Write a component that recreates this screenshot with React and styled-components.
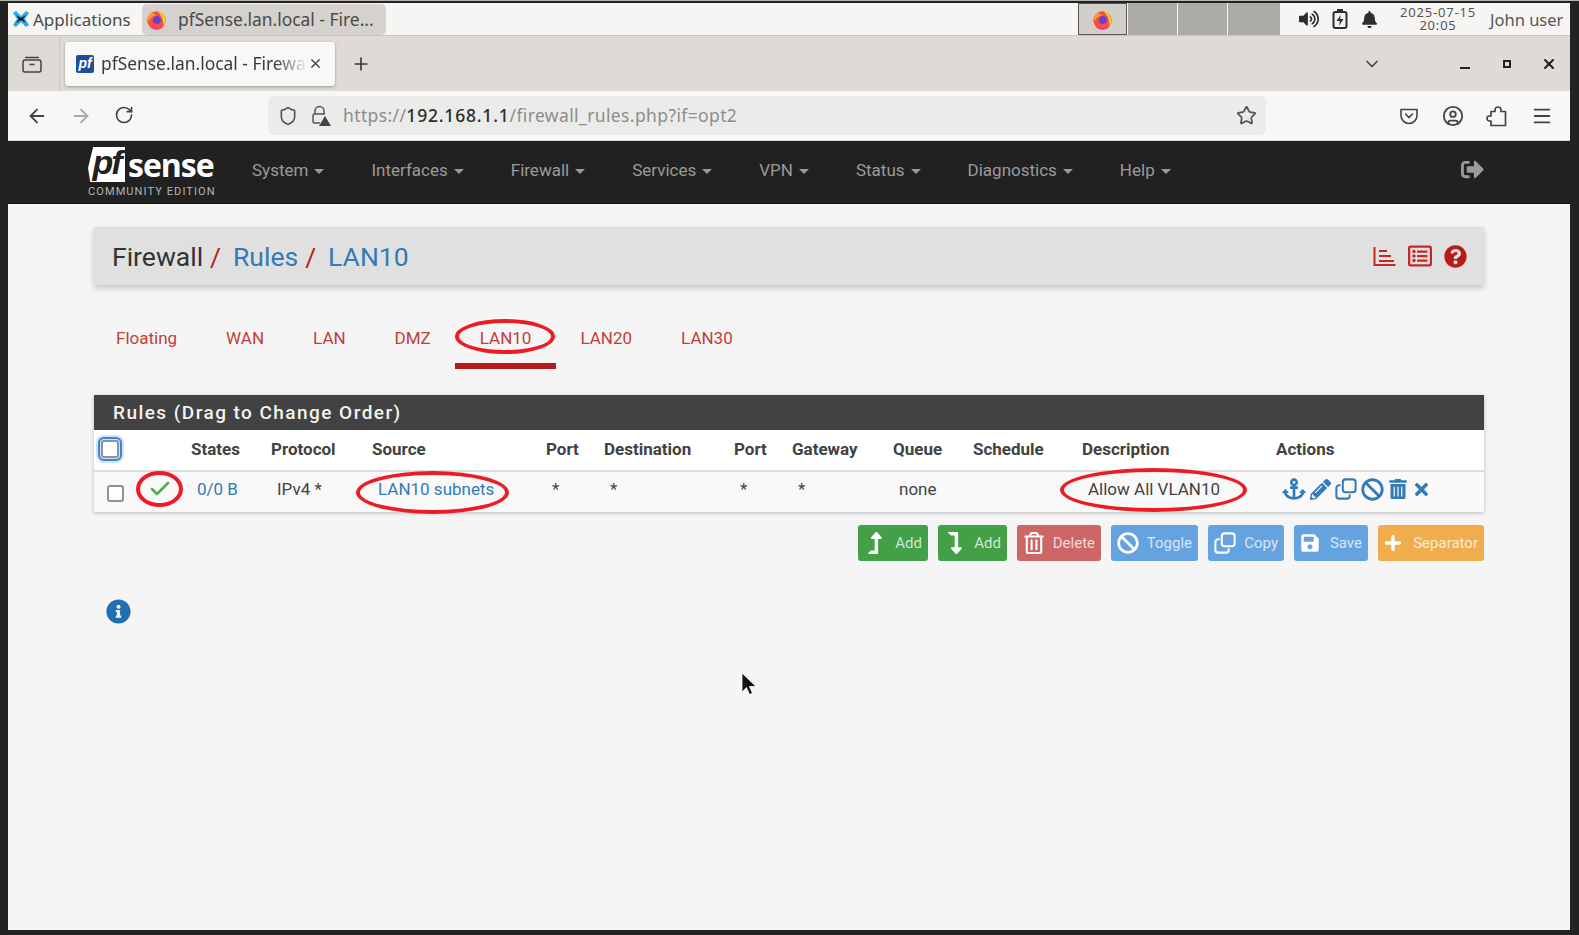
import styled, { createGlobalStyle } from "styled-components";
import {
  ArrowLeft,
  ArrowRight,
  Check,
  RotateCw,
  Shield,
  Star,
  Plus,
  X,
  ChevronDown,
  Menu,
  CircleUser,
} from "lucide-react";
import {
  FaAnchor,
  FaBan,
  FaBell,
  FaInfoCircle,
  FaLevelDownAlt,
  FaLevelUpAlt,
  FaPencilAlt,
  FaPlus,
  FaQuestionCircle,
  FaRegListAlt,
  FaRegTrashAlt,
  FaSave,
  FaSignOutAlt,
  FaTimes,
  FaTrashAlt,
  FaVolumeUp,
} from "react-icons/fa";

const GlobalStyle = createGlobalStyle`
  html, body {
    margin: 0;
    height: 100%;
    background: #222222;
    overflow: hidden;
  }
  * { box-sizing: border-box; }
`;

const Screen = styled.div`
  width: 1579px;
  height: 935px;
  padding: 2px 9px 5px 8px;
  background: #222222;
  border-top: 1px solid #b5b5b5;
  position: relative;
`;

const Desktop = styled.div`
  height: 100%;
  display: flex;
  flex-direction: column;
  background: #f5f5f5;
`;

/* xfce panel */
const Panel = styled.div`
  height: 33px;
  flex: none;
  display: flex;
  align-items: center;
  background: #f6f5f4;
  border-bottom: 1px solid #c9c6c1;
  font-family: "Noto Sans", sans-serif;
  color: #4a4a48;
  font-size: 17px;
`;

const AppMenu = styled.div`
  display: flex;
  align-items: center;
  gap: 3px;
  padding-left: 4px;
  width: 134px;
  flex: none;
`;

const WindowButton = styled.div`
  width: 244px;
  height: 31px;
  flex: none;
  display: flex;
  align-items: center;
  gap: 11px;
  padding-left: 4px;
  border-radius: 5px;
  background: #d5d1cc;
  font-size: 17.4px;
  white-space: nowrap;
`;

const Spacer = styled.div`
  flex: 1;
`;

const Workspaces = styled.div`
  display: flex;
  gap: 1px;
  height: 32px;
  margin-right: 19px;
`;

const Workspace = styled.div`
  width: ${({ $w }) => $w}px;
  display: flex;
  align-items: center;
  justify-content: center;
  background: ${({ $active }) => ($active ? "#d2cfca" : "#adaba7")};
  border: ${({ $active }) => ($active ? "1px solid #555" : "none")};
`;

const Tray = styled.div`
  display: flex;
  align-items: center;
  gap: 13px;
  color: #2e2e2e;
`;

const Clock = styled.div`
  margin-left: 19px;
  padding-bottom: 1px;
  text-align: center;
  font-size: 13px;
  line-height: 13px;
  letter-spacing: 0.8px;
  width: 82px;
  color: #555;
`;

const UserName = styled.div`
  margin-left: 11px;
  width: 80px;
  font-size: 16.5px;
  color: #555;
`;

/* firefox chrome */
const TabStrip = styled.div`
  height: 55px;
  flex: none;
  display: flex;
  align-items: center;
  background: #dedbd6;
  font-family: "Noto Sans", sans-serif;
  color: #3a3a3a;
`;

const StripIcon = styled.div`
  width: 52px;
  height: 100%;
  flex: none;
  display: flex;
  align-items: center;
  justify-content: center;
  padding-right: 3px;
  border-right: 1px solid #c8c5c0;
`;

const BrowserTab = styled.div`
  width: 270px;
  height: 44px;
  margin-left: 5px;
  display: flex;
  align-items: center;
  padding-left: 11px;
  background: #f8f8f7;
  border-radius: 4px;
  box-shadow: 0 1px 3px rgba(0, 0, 0, 0.3);
  font-size: 17.4px;
  position: relative;
`;

const TabTitle = styled.div`
  margin: -2px 0 0 7px;
  width: 207px;
  white-space: nowrap;
  -webkit-mask-image: linear-gradient(to right, #000 84%, transparent 100%);
  mask-image: linear-gradient(to right, #000 84%, transparent 100%);
`;

const Favicon = styled.div`
  width: 18px;
  height: 18px;
  flex: none;
  background: #1b4f9c;
  border-radius: 2px;
  color: #fff;
  font: italic 700 14px/17px "Liberation Sans", sans-serif;
  text-align: center;
`;

const NewTab = styled.div`
  margin-left: 16px;
  display: flex;
`;

const WindowControls = styled.div`
  display: flex;
  align-items: center;
  color: #1f1f1f;
`;

const ListTabs = styled.div`
  display: flex;
  margin-right: 62px;
  color: #444;
`;

const WinBtn = styled.div`
  width: 42px;
  display: flex;
  justify-content: center;
  align-items: center;
`;

const MinimizeBar = styled.div`
  width: 10px;
  height: 2px;
  margin-top: 8px;
  background: #222;
`;

const MaximizeBox = styled.div`
  width: 8px;
  height: 8px;
  border: 2px solid #222;
`;

const Toolbar = styled.div`
  height: 50px;
  flex: none;
  display: flex;
  align-items: center;
  background: #f7f7f6;
  border-bottom: 1px solid #d6d4d0;
  font-family: "Noto Sans", sans-serif;
`;

const NavButtons = styled.div`
  width: 260px;
  flex: none;
  padding-left: 18px;
  display: flex;
  gap: 22px;
  color: #444;
`;

const UrlBar = styled.div`
  width: 998px;
  height: 39px;
  display: flex;
  align-items: center;
  padding: 0 9px 0 10px;
  background: #ebebea;
  border-radius: 6px;
  color: #555;
`;

const UrlText = styled.div`
  margin: -2px 0 0 12px;
  flex: 1;
  font-size: 17.5px;
  letter-spacing: 0.38px;
  color: #8d8d8d;
  white-space: nowrap;
`;

const UrlHost = styled.span`
  color: #2c2c2c;
  font-weight: 500;
  letter-spacing: 0.8px;
`;

const LockWrap = styled.div`
  margin-left: 13px;
  display: flex;
`;

const ToolIcons = styled.div`
  display: flex;
  align-items: center;
  gap: 22.5px;
  padding-left: 133px;
  color: #444;
`;

/* pfSense */
const TopNav = styled.nav`
  height: 63px;
  flex: none;
  display: flex;
  align-items: center;
  padding: 0 86px 0 80px;
  background: #212121;
  border-bottom: 1px solid #111;
  font-family: "Roboto", sans-serif;
`;

const Logo = styled.div`
  width: 128px;
  flex: none;
  margin-right: 36px;
  display: flex;
  flex-direction: column;
  color: #fff;
`;

const LogoTop = styled.div`
  display: flex;
  align-items: center;
  height: 37px;
`;

const LogoMark = styled.div`
  width: 37px;
  height: 35px;
  background: #fff;
  color: #212121;
  border-radius: 3px 0 0 0;
  clip-path: polygon(14% 0, 100% 0, 100% 100%, 6% 100%, 0 60%);
  font: italic 700 34px/31px "Liberation Sans", sans-serif;
  letter-spacing: -2px;
  text-align: center;
`;

const LogoWord = styled.div`
  margin-left: 3px;
  font: 700 32px/37px "Open Sans", sans-serif;
  letter-spacing: -1px;
`;

const LogoSub = styled.div`
  margin-top: 2px;
  font-size: 11px;
  line-height: 13px;
  letter-spacing: 1.1px;
  color: #b5b5b5;
  white-space: nowrap;
`;

const NavItems = styled.div`
  display: flex;
  gap: 47px;
  flex: 1;
  padding-bottom: 4px;
`;

const NavItem = styled.div`
  display: flex;
  align-items: center;
  gap: 6px;
  font-size: 17px;
  color: #9a9a9a;
`;

const Caret = styled.span`
  width: 0;
  height: 0;
  margin-top: 2px;
  border-left: 5px solid transparent;
  border-right: 5px solid transparent;
  border-top: 5px solid #9a9a9a;
`;

const LogoutIcon = styled.div`
  display: flex;
  padding-bottom: 5px;
  color: #9a9a9a;
`;

const Main = styled.main`
  flex: 1;
  padding: 23px 86px 0;
  font-family: "Roboto", sans-serif;
  color: #424242;
  position: relative;
`;

const Crumbs = styled.div`
  height: 58px;
  display: flex;
  align-items: center;
  padding: 0 17px 0 18px;
  background: #e0e0e0;
  box-shadow: 0 3px 6px rgba(0, 0, 0, 0.2);
  font-size: 26.5px;
  white-space: pre;
`;

const CrumbText = styled.span`
  color: ${({ $link }) => ($link ? "#337ab7" : "#333")};
`;

const CrumbSlash = styled.span`
  color: #b71c1c;
  margin: 0 12px 0 7px;
`;

const CrumbIcons = styled.div`
  margin-left: auto;
  display: flex;
  align-items: center;
  gap: 12px;
  color: #c62828;
`;

const QuestionIcon = styled.span`
  display: flex;
  color: #b71c1c;
`;

const Tabs = styled.div`
  margin: 30px 0 0 -2.5px;
  display: flex;
`;

const TabLink = styled.div`
  height: 54px;
  padding: 12px 24.5px 0;
  position: relative;
  font-size: 17px;
  line-height: 22px;
  color: #c43c3c;
  border-bottom: 6px solid ${({ $active }) => ($active ? "#b71c1c" : "transparent")};
`;

const Ring = styled.span`
  position: absolute;
  border: 4px solid #ed1c24;
  border-radius: 50%;
  pointer-events: none;
`;

const TabRing = styled(Ring)`
  left: 0;
  top: 4px;
  width: 100px;
  height: 35px;
`;

const StatusRing = styled(Ring)`
  left: 2px;
  top: -1px;
  width: 47px;
  height: 36px;
`;

const SourceRing = styled(Ring)`
  left: -9px;
  top: -1px;
  width: 153px;
  height: 43px;
`;

const DescriptionRing = styled(Ring)`
  left: -15px;
  top: -4px;
  width: 187px;
  height: 44px;
`;

const RulesPanel = styled.section`
  margin-top: 26px;
  box-shadow: 0 1px 4px rgba(0, 0, 0, 0.25);
`;

const PanelTitle = styled.h2`
  margin: 0;
  height: 35px;
  padding-left: 19px;
  background: #424242;
  color: #f2f2f2;
  font-size: 19px;
  font-weight: 500;
  line-height: 35px;
  letter-spacing: 1.45px;
`;

const columns = "40px 50px 80px 101px 174px 58px 130px 58px 101px 80px 109px 194px 1fr";

const HeadRow = styled.div`
  display: grid;
  grid-template-columns: ${columns};
  height: 42px;
  padding-bottom: 2px;
  align-items: center;
  background: #fff;
  border-bottom: 2px solid #ddd;
`;

const HeadCell = styled.div`
  padding-left: 7px;
  font-size: 17px;
  font-weight: 700;
  color: #424242;
  white-space: nowrap;
`;

const DataRow = styled.div`
  display: grid;
  grid-template-columns: ${columns};
  height: 40px;
  align-items: center;
  background: #f9f9f9;
`;

const DataCell = styled.div`
  position: relative;
  height: 100%;
  display: flex;
  align-items: center;
  padding: 0 0 6px 13px;
  font-size: 17px;
  white-space: nowrap;
  color: ${({ $link }) => ($link ? "#337ab7" : "#424242")};
`;

const HeadCheck = styled.input`
  appearance: none;
  margin: 0 0 0 7px;
  width: 18px;
  height: 18px;
  background: #fff;
  border: 2px solid #8f8f9d;
  border-radius: 3px;
  outline: 2px solid #3b82e0;
  outline-offset: 1px;
  box-shadow: 0 0 0 5px rgba(59, 130, 224, 0.22);
`;

const RowCheck = styled.input`
  appearance: none;
  margin: 8px 0 0;
  width: 17px;
  height: 17px;
  background: #fff;
  border: 2px solid #8f8f9d;
  border-radius: 3px;
`;

const StatusIcon = styled.div`
  display: flex;
  margin-left: 1px;
  color: #4caf50;
`;

const ActionIcons = styled.div`
  display: flex;
  align-items: center;
  gap: 4px;
  color: #337ab7;
`;

const ButtonRow = styled.div`
  margin-top: 13px;
  display: flex;
  justify-content: flex-end;
  gap: 10px;
`;

const ActionButton = styled.div`
  width: ${({ $w }) => $w}px;
  height: 36px;
  display: flex;
  align-items: center;
  justify-content: space-between;
  padding: 0 6px;
  background: ${({ $bg }) => $bg};
  border-radius: 3px;
  color: rgba(255, 255, 255, 0.75);
  font-size: 15px;
`;

const ButtonIcon = styled.span`
  display: flex;
  color: #fff;
`;

const InfoIcon = styled.div`
  margin: 38px 0 0 12px;
  display: flex;
  color: #1f6fb2;
`;

const Pointer = styled.svg`
  position: absolute;
  left: 741px;
  top: 671px;
`;

function FirefoxIcon({ size = 22 }) {
  return (
    <svg width={size} height={size} viewBox="0 0 24 24">
      <circle cx="12" cy="13" r="10.5" fill="#f5503f" />
      <path d="M4 20a10.5 10.5 0 0 0 16 0c-5 2-11 2-16 0z" fill="#f0388f" />
      <path d="M13 2c5 2 9 6 9 11 0 3-1 5-2 6 0-8-3-12-7-17z" fill="#ffcb2f" />
      <path d="M6 4c-3 3-4 6-3 10 3-5 6-7 9-7-2-1-4-2-6-3z" fill="#ff9a2b" />
      <circle cx="12.5" cy="12.5" r="4.6" fill="#6b3fd4" />
    </svg>
  );
}

function XfceIcon() {
  return (
    <svg width="18" height="18" viewBox="0 0 18 18">
      <path d="M1 3l3-2 5 5 5-5 3 2-4 6 4 6-3 2-5-5-5 5-3-2 4-6z" fill="#29a9e8" />
      <path d="M4 5l5 3 5-3-3 4 3 4-5-3-5 3 3-4z" fill="#111" />
    </svg>
  );
}

function TabGroupIcon() {
  return (
    <svg width="20" height="20" viewBox="0 0 20 20" fill="none" stroke="#444" strokeWidth="1.5">
      <rect x="1" y="6" width="18" height="12" rx="2" />
      <path d="M3 3.500h14M7.500 10.500h5" />
    </svg>
  );
}

function SiteLockIcon() {
  return (
    <svg width="20" height="22" viewBox="0 0 20 22" fill="none">
      <path d="M4 9V6a4.500 4.500 0 0 1 9 0v3" stroke="#555" strokeWidth="1.5" />
      <path d="M9 18H3.500A1.500 1.500 0 0 1 2 16.500V10.500A1.500 1.500 0 0 1 3.500 9H14" stroke="#555" strokeWidth="1.5" />
      <path d="M14 11l6 10H8z" fill="#444" />
    </svg>
  );
}

function PocketIcon() {
  return (
    <svg width="20" height="20" viewBox="0 0 20 20" fill="none" stroke="#444" strokeWidth="1.6">
      <path d="M2 3.500h16v6a8 8 0 0 1-16 0z" strokeLinejoin="round" />
      <path d="M6.500 8l3.500 3.500L13.500 8" strokeLinecap="round" />
    </svg>
  );
}

function ExtensionIcon() {
  return (
    <svg width="22" height="22" viewBox="0 0 22 22" fill="none" stroke="#444" strokeWidth="1.7" strokeLinejoin="round">
      <path d="M9 6.500V5a3 3 0 0 1 6 0v1.500h4.500v14H5V16H3.500a2.500 2.500 0 0 1 0-5H5V6.500z" />
    </svg>
  );
}

function BatteryIcon() {
  return (
    <svg width="16" height="20" viewBox="0 0 16 20" fill="none">
      <rect x="1.500" y="3" width="13" height="16" rx="2" stroke="#2e2e2e" strokeWidth="2" />
      <rect x="5" y="0" width="6" height="3" fill="#2e2e2e" />
      <path d="M9 5.500L4.500 12H8l-1 5 4.500-7H8z" fill="#2e2e2e" />
    </svg>
  );
}

function ChartIcon() {
  return (
    <svg width="23" height="21" viewBox="0 0 23 21" fill="none" stroke="currentColor" strokeWidth="2">
      <path d="M1.500 1v18h21" />
      <path d="M6 5h8M6 10h12M6 15h15" />
    </svg>
  );
}

function CloneIcon({ size }) {
  return (
    <svg width={size} height={size} viewBox="0 0 24 24" fill="none" stroke="currentColor" strokeWidth="2.2">
      <rect x="8.500" y="1.500" width="14" height="14" rx="3" />
      <path d="M6 8H4.500a3 3 0 0 0-3 3v8.500a3 3 0 0 0 3 3H13a3 3 0 0 0 3-3V18" />
    </svg>
  );
}

const navItems = ["System", "Interfaces", "Firewall", "Services", "VPN", "Status", "Diagnostics", "Help"];

function Columns() {
  const titles = ["States", "Protocol", "Source", "Port", "Destination", "Port", "Gateway", "Queue", "Schedule", "Description", "Actions"];
  return titles.map((title, i) => <HeadCell key={i}>{title}</HeadCell>);
}

export default function App() {
  return (
    <>
      <GlobalStyle />
      <Screen>
        <Desktop>
          <Panel>
            <AppMenu>
              <XfceIcon />
              Applications
            </AppMenu>
            <WindowButton>
              <FirefoxIcon size={21} />
              pfSense.lan.local - Fire...
            </WindowButton>
            <Spacer />
            <Workspaces>
              <Workspace $w={49} $active>
                <FirefoxIcon size={21} />
              </Workspace>
              <Workspace $w={49} />
              <Workspace $w={49} />
              <Workspace $w={52} />
            </Workspaces>
            <Tray>
              <FaVolumeUp size={20} />
              <BatteryIcon />
              <FaBell size={17} />
            </Tray>
            <Clock>
              2025-07-15
              <br />
              20:05
            </Clock>
            <UserName>John user</UserName>
          </Panel>

          <TabStrip>
            <StripIcon>
              <TabGroupIcon />
            </StripIcon>
            <BrowserTab>
              <Favicon>pf</Favicon>
              <TabTitle>pfSense.lan.local - Firewa</TabTitle>
              <X size={15} />
            </BrowserTab>
            <NewTab>
              <Plus size={20} />
            </NewTab>
            <Spacer />
            <ListTabs>
              <ChevronDown size={20} />
            </ListTabs>
            <WindowControls>
              <WinBtn>
                <MinimizeBar />
              </WinBtn>
              <WinBtn>
                <MaximizeBox />
              </WinBtn>
              <WinBtn>
                <X size={16} strokeWidth={3} />
              </WinBtn>
            </WindowControls>
          </TabStrip>

          <Toolbar>
            <NavButtons>
              <ArrowLeft size={22} />
              <ArrowRight size={22} color="#aaa" />
              <RotateCw size={20} />
            </NavButtons>
            <UrlBar>
              <Shield size={20} />
              <LockWrap>
                <SiteLockIcon />
              </LockWrap>
              <UrlText>
                https://<UrlHost>192.168.1.1</UrlHost>/firewall_rules.php?if=opt2
              </UrlText>
              <Star size={21} />
            </UrlBar>
            <ToolIcons>
              <PocketIcon />
              <CircleUser size={22} />
              <ExtensionIcon />
              <Menu size={22} />
            </ToolIcons>
          </Toolbar>

          <TopNav>
            <Logo>
              <LogoTop>
                <LogoMark>pf</LogoMark>
                <LogoWord>sense</LogoWord>
              </LogoTop>
              <LogoSub>COMMUNITY EDITION</LogoSub>
            </Logo>
            <NavItems>
              {navItems.map((item) => (
                <NavItem key={item}>
                  {item}
                  <Caret />
                </NavItem>
              ))}
            </NavItems>
            <LogoutIcon>
              <FaSignOutAlt size={23} />
            </LogoutIcon>
          </TopNav>

          <Main>
            <Crumbs>
              <CrumbText>Firewall</CrumbText>
              <CrumbSlash>/</CrumbSlash>
              <CrumbText $link>Rules</CrumbText>
              <CrumbSlash>/</CrumbSlash>
              <CrumbText $link>LAN10</CrumbText>
              <CrumbIcons>
                <ChartIcon />
                <FaRegListAlt size={24} />
                <QuestionIcon>
                  <FaQuestionCircle size={23} />
                </QuestionIcon>
              </CrumbIcons>
            </Crumbs>

            <Tabs>
              <TabLink>Floating</TabLink>
              <TabLink>WAN</TabLink>
              <TabLink>LAN</TabLink>
              <TabLink>DMZ</TabLink>
              <TabLink $active>
                LAN10
                <TabRing />
              </TabLink>
              <TabLink>LAN20</TabLink>
              <TabLink>LAN30</TabLink>
            </Tabs>

            <RulesPanel>
              <PanelTitle>Rules (Drag to Change Order)</PanelTitle>
              <HeadRow>
                <HeadCheck type="checkbox" readOnly />
                <div />
                <Columns />
              </HeadRow>
              <DataRow>
                <DataCell>
                  <RowCheck type="checkbox" readOnly />
                </DataCell>
                <DataCell>
                  <StatusIcon>
                    <Check size={24} strokeWidth={2.6} />
                  </StatusIcon>
                  <StatusRing />
                </DataCell>
                <DataCell $link>0/0 B</DataCell>
                <DataCell>IPv4 *</DataCell>
                <DataCell $link>
                  LAN10 subnets
                  <SourceRing />
                </DataCell>
                <DataCell>*</DataCell>
                <DataCell>*</DataCell>
                <DataCell>*</DataCell>
                <DataCell>*</DataCell>
                <DataCell>none</DataCell>
                <DataCell />
                <DataCell>
                  Allow All VLAN10
                  <DescriptionRing />
                </DataCell>
                <DataCell>
                  <ActionIcons>
                    <FaAnchor size={24} />
                    <FaPencilAlt size={21} />
                    <CloneIcon size={22} />
                    <FaBan size={23} />
                    <FaTrashAlt size={20} />
                    <FaTimes size={19} />
                  </ActionIcons>
                </DataCell>
              </DataRow>
            </RulesPanel>

            <ButtonRow>
              <ActionButton $w={70} $bg="#43a047">
                <ButtonIcon>
                  <FaLevelUpAlt size={22} />
                </ButtonIcon>
                Add
              </ActionButton>
              <ActionButton $w={69} $bg="#43a047">
                <ButtonIcon>
                  <FaLevelDownAlt size={22} />
                </ButtonIcon>
                Add
              </ActionButton>
              <ActionButton $w={84} $bg="#cd6666">
                <ButtonIcon>
                  <FaRegTrashAlt size={22} />
                </ButtonIcon>
                Delete
              </ActionButton>
              <ActionButton $w={87} $bg="#64a3df">
                <ButtonIcon>
                  <FaBan size={22} />
                </ButtonIcon>
                Toggle
              </ActionButton>
              <ActionButton $w={76} $bg="#64a3df">
                <ButtonIcon>
                  <CloneIcon size={22} />
                </ButtonIcon>
                Copy
              </ActionButton>
              <ActionButton $w={74} $bg="#64a3df">
                <ButtonIcon>
                  <FaSave size={20} />
                </ButtonIcon>
                Save
              </ActionButton>
              <ActionButton $w={106} $bg="#f0ad4e">
                <ButtonIcon>
                  <FaPlus size={18} />
                </ButtonIcon>
                Separator
              </ActionButton>
            </ButtonRow>

            <InfoIcon>
              <FaInfoCircle size={25} />
            </InfoIcon>
          </Main>
        </Desktop>
        <Pointer width="16" height="25" viewBox="0 0 16 25">
          <path d="M1 1l0 19 4.500-4.500 3 7 3-1.300-3-6.700H15z" fill="#111" stroke="#fff" strokeWidth="0.8" />
        </Pointer>
      </Screen>
    </>
  );
}
